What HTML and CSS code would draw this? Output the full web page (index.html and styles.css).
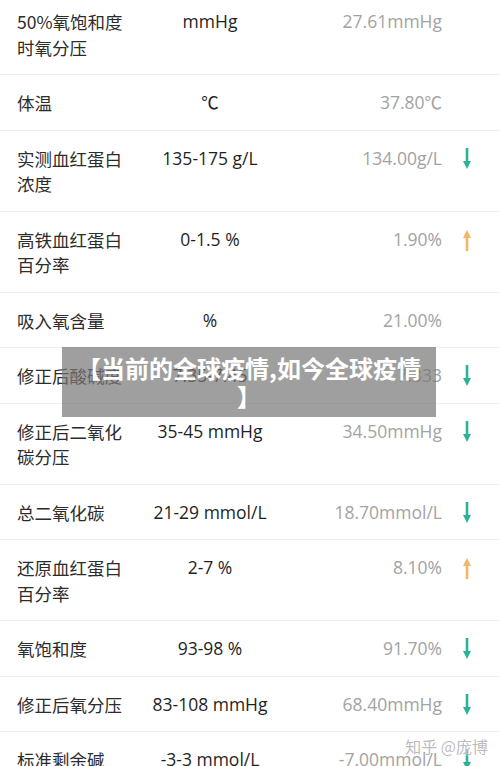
FILE: index.html
```html
<!DOCTYPE html>
<html lang="zh-CN">
<head>
<meta charset="utf-8">
<title>血气分析</title>
<link rel="stylesheet" href="styles.css">
</head>
<body>
<div class="page">
  <div class="table">
    <div class="row">
      <div class="label">50%氧饱和度时氧分压</div>
      <div class="range">mmHg</div>
      <div class="value">27.61mmHg</div>
      <div class="flag"></div>
    </div>
    <div class="row">
      <div class="label">体温</div>
      <div class="range">℃</div>
      <div class="value">37.80℃</div>
      <div class="flag"></div>
    </div>
    <div class="row">
      <div class="label">实测血红蛋白浓度</div>
      <div class="range">135-175 g/L</div>
      <div class="value">134.00g/L</div>
      <div class="flag"><svg class="arrow down" viewBox="0 0 10 24"><path d="M5 1V16"/><polygon points="1,14 9,14 5,22"/></svg></div>
    </div>
    <div class="row">
      <div class="label">高铁血红蛋白百分率</div>
      <div class="range">0-1.5 %</div>
      <div class="value">1.90%</div>
      <div class="flag"><svg class="arrow up" viewBox="0 0 10 24"><path d="M5 23V8"/><polygon points="1,10 9,10 5,2"/></svg></div>
    </div>
    <div class="row">
      <div class="label">吸入氧含量</div>
      <div class="range">%</div>
      <div class="value">21.00%</div>
      <div class="flag"></div>
    </div>
    <div class="row">
      <div class="label">修正后酸碱度</div>
      <div class="range">7.35-7.45</div>
      <div class="value">7.333</div>
      <div class="flag"><svg class="arrow down" viewBox="0 0 10 24"><path d="M5 1V16"/><polygon points="1,14 9,14 5,22"/></svg></div>
    </div>
    <div class="row">
      <div class="label">修正后二氧化碳分压</div>
      <div class="range">35-45 mmHg</div>
      <div class="value">34.50mmHg</div>
      <div class="flag"><svg class="arrow down" viewBox="0 0 10 24"><path d="M5 1V16"/><polygon points="1,14 9,14 5,22"/></svg></div>
    </div>
    <div class="row">
      <div class="label">总二氧化碳</div>
      <div class="range">21-29 mmol/L</div>
      <div class="value">18.70mmol/L</div>
      <div class="flag"><svg class="arrow down" viewBox="0 0 10 24"><path d="M5 1V16"/><polygon points="1,14 9,14 5,22"/></svg></div>
    </div>
    <div class="row">
      <div class="label">还原血红蛋白百分率</div>
      <div class="range">2-7 %</div>
      <div class="value">8.10%</div>
      <div class="flag"><svg class="arrow up" viewBox="0 0 10 24"><path d="M5 23V8"/><polygon points="1,10 9,10 5,2"/></svg></div>
    </div>
    <div class="row">
      <div class="label">氧饱和度</div>
      <div class="range">93-98 %</div>
      <div class="value">91.70%</div>
      <div class="flag"><svg class="arrow down" viewBox="0 0 10 24"><path d="M5 1V16"/><polygon points="1,14 9,14 5,22"/></svg></div>
    </div>
    <div class="row">
      <div class="label">修正后氧分压</div>
      <div class="range">83-108 mmHg</div>
      <div class="value">68.40mmHg</div>
      <div class="flag"><svg class="arrow down" viewBox="0 0 10 24"><path d="M5 1V16"/><polygon points="1,14 9,14 5,22"/></svg></div>
    </div>
    <div class="row">
      <div class="label">标准剩余碱</div>
      <div class="range">-3-3 mmol/L</div>
      <div class="value">-7.00mmol/L</div>
      <div class="flag"><svg class="arrow down" viewBox="0 0 10 24"><path d="M5 1V16"/><polygon points="1,14 9,14 5,22"/></svg></div>
    </div>
  </div>
  <div class="banner">【当前的全球疫情,如今全球疫情】</div>
  <div class="watermark">知乎 @庞博</div>
</div>
</body>
</html>
```

FILE: styles.css
```css
html, body {
  margin: 0;
  padding: 0;
  background: #ffffff;
}
body {
  width: 500px;
  height: 766px;
  overflow: hidden;
  font-family: "Open Sans", "Noto Sans CJK SC", sans-serif;
}
.page {
  position: relative;
  width: 500px;
  height: 766px;
  overflow: hidden;
}
.table {
  margin-top: -6px;
}
.row {
  display: grid;
  grid-template-columns: 110px 166px 1fr 50px;
  padding: 15px 8px 14px 17px;
  border-bottom: 1px solid #efefef;
  font-size: 17.5px;
  line-height: 25.5px;
}
.label {
  color: #2c2c2c;
  font-family: "Noto Sans CJK SC", sans-serif;
}
.range {
  color: #1f1f1f;
  text-align: center;
}
.value {
  color: #a3a3a3;
  text-align: right;
}
.flag {
  display: flex;
  justify-content: center;
  align-items: flex-start;
  padding-top: 1px;
}
.arrow {
  width: 10px;
  height: 24px;
}
.arrow path {
  stroke-width: 2.6;
  fill: none;
}
.arrow.down path { stroke: #2cb297; }
.arrow.down polygon { fill: #2cb297; }
.arrow.up path { stroke: #f0b866; }
.arrow.up polygon { fill: #f0b866; }
.banner {
  position: absolute;
  left: 62px;
  top: 347px;
  width: 374px;
  box-sizing: border-box;
  padding: 7px 14px;
  background: rgba(118, 118, 118, 0.7);
  color: #ffffff;
  font-family: "Noto Sans CJK SC", sans-serif;
  font-weight: 700;
  font-size: 24px;
  line-height: 28px;
  text-align: center;
  line-break: anywhere;
}
.watermark {
  position: absolute;
  right: 12px;
  bottom: 8px;
  font-family: "Noto Sans CJK SC", sans-serif;
  font-size: 16px;
  color: rgba(175, 175, 175, 0.85);
  text-shadow: 0 0 2px #ffffff;
}
```
